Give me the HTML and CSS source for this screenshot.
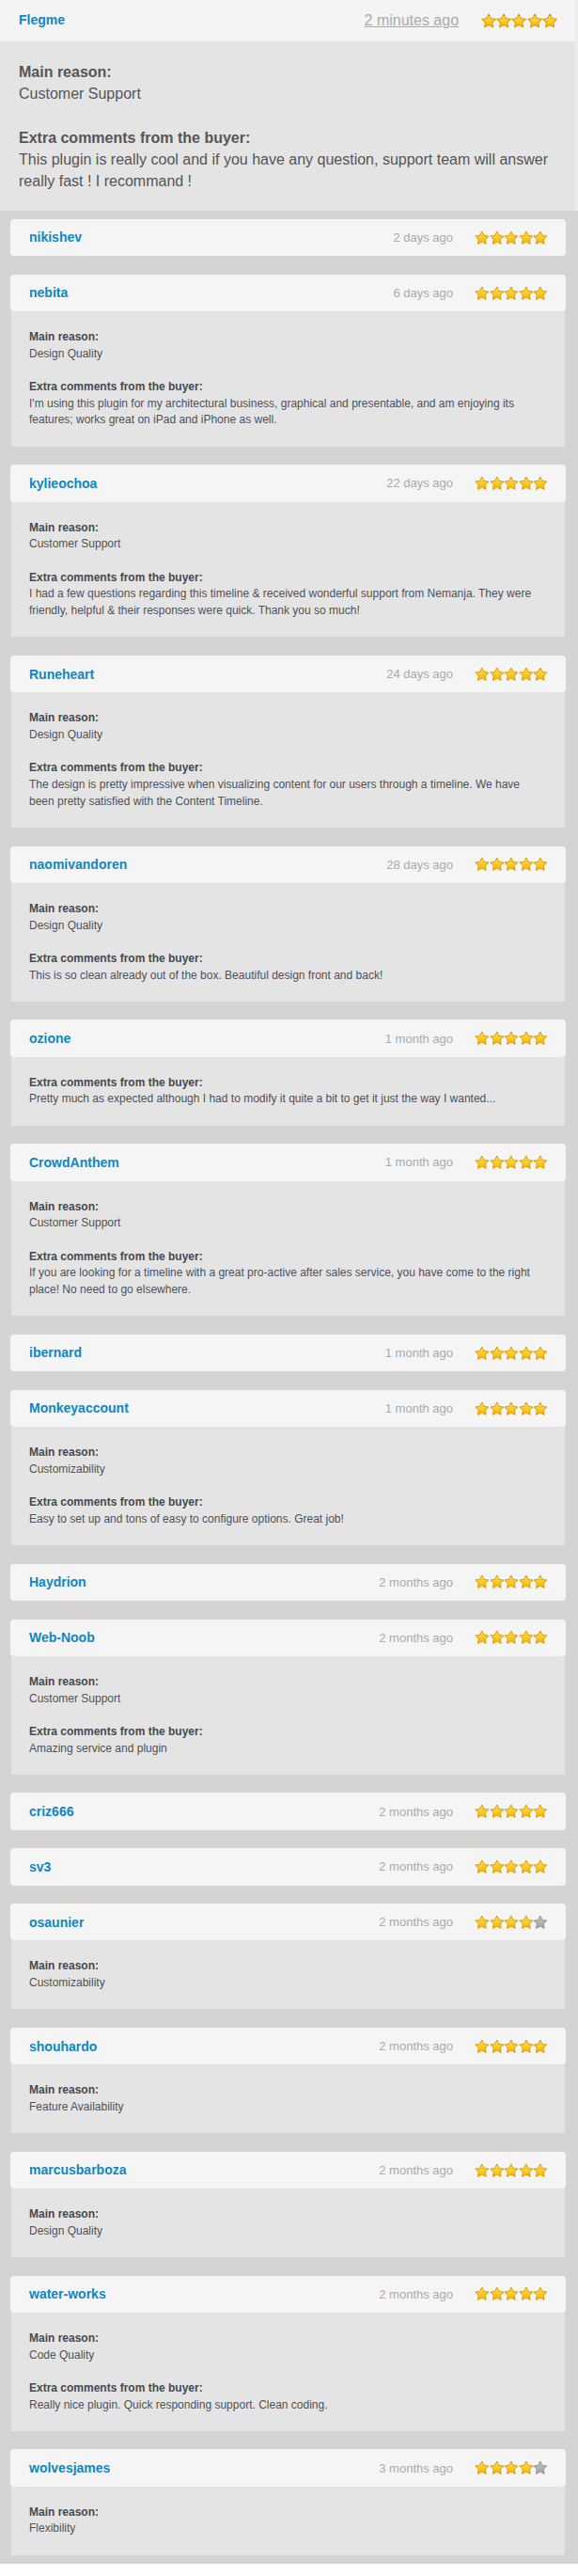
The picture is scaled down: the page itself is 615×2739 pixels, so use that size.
FILE: index.html
```html
<!DOCTYPE html>
<html lang="en">
<head>
<meta charset="utf-8">
<title>Reviews</title>
<link rel="stylesheet" href="styles.css">
</head>
<body>
<svg class="sprite" aria-hidden="true">
  <defs>
    <linearGradient id="gold" x1="0" y1="0" x2="0" y2="1">
      <stop offset="0" stop-color="#ffe15a"/>
      <stop offset="1" stop-color="#f7b500"/>
    </linearGradient>
    <linearGradient id="grey" x1="0" y1="0" x2="0" y2="1">
      <stop offset="0" stop-color="#c4c4c4"/>
      <stop offset="1" stop-color="#a2a2a2"/>
    </linearGradient>
    <symbol id="star-on" viewBox="0 0 16 16">
      <path d="M8 1 L10.23 5.53 L15.23 6.25 L11.61 9.77 L12.47 14.75 L8 12.4 L3.53 14.75 L4.39 9.77 L0.77 6.25 L5.77 5.53 Z" fill="url(#gold)" stroke="#d99a00" stroke-width="1" stroke-linejoin="round"/>
    </symbol>
    <symbol id="star-off" viewBox="0 0 16 16">
      <path d="M8 1 L10.23 5.53 L15.23 6.25 L11.61 9.77 L12.47 14.75 L8 12.4 L3.53 14.75 L4.39 9.77 L0.77 6.25 L5.77 5.53 Z" fill="url(#grey)" stroke="#929292" stroke-width="1" stroke-linejoin="round"/>
    </symbol>
  </defs>
</svg>

<div class="page-head">
  <div class="featured">
    <div class="featured-head">
      <span class="featured-name">Flegme</span>
      <a class="featured-date" href="#">2 minutes ago</a>
      <span class="stars stars-lg">
        <svg><use href="#star-on"/></svg><svg><use href="#star-on"/></svg><svg><use href="#star-on"/></svg><svg><use href="#star-on"/></svg><svg><use href="#star-on"/></svg>
      </span>
    </div>
    <div class="featured-body">
      <strong>Main reason:</strong><br>Customer Support<br><br>
      <strong>Extra comments from the buyer:</strong><br>This plugin is really cool and if you have any question, support team will answer really fast ! I recommand !
    </div>
  </div>
</div>

<div class="list">
  <div class="card">
    <div class="card-head"><span class="name">nikishev</span><span class="date">2 days ago</span><span class="stars"><svg><use href="#star-on"/></svg><svg><use href="#star-on"/></svg><svg><use href="#star-on"/></svg><svg><use href="#star-on"/></svg><svg><use href="#star-on"/></svg></span></div>
  </div>

  <div class="card">
    <div class="card-head"><span class="name">nebita</span><span class="date">6 days ago</span><span class="stars"><svg><use href="#star-on"/></svg><svg><use href="#star-on"/></svg><svg><use href="#star-on"/></svg><svg><use href="#star-on"/></svg><svg><use href="#star-on"/></svg></span></div>
    <div class="card-body"><strong>Main reason:</strong><br>Design Quality<br><br><strong>Extra comments from the buyer:</strong><br>I'm using this plugin for my architectural business, graphical and presentable, and am enjoying its features; works great on iPad and iPhone as well.</div>
  </div>

  <div class="card">
    <div class="card-head"><span class="name">kylieochoa</span><span class="date">22 days ago</span><span class="stars"><svg><use href="#star-on"/></svg><svg><use href="#star-on"/></svg><svg><use href="#star-on"/></svg><svg><use href="#star-on"/></svg><svg><use href="#star-on"/></svg></span></div>
    <div class="card-body"><strong>Main reason:</strong><br>Customer Support<br><br><strong>Extra comments from the buyer:</strong><br>I had a few questions regarding this timeline &amp; received wonderful support from Nemanja. They were friendly, helpful &amp; their responses were quick. Thank you so much!</div>
  </div>

  <div class="card">
    <div class="card-head"><span class="name">Runeheart</span><span class="date">24 days ago</span><span class="stars"><svg><use href="#star-on"/></svg><svg><use href="#star-on"/></svg><svg><use href="#star-on"/></svg><svg><use href="#star-on"/></svg><svg><use href="#star-on"/></svg></span></div>
    <div class="card-body"><strong>Main reason:</strong><br>Design Quality<br><br><strong>Extra comments from the buyer:</strong><br>The design is pretty impressive when visualizing content for our users through a timeline. We have been pretty satisfied with the Content Timeline.</div>
  </div>

  <div class="card">
    <div class="card-head"><span class="name">naomivandoren</span><span class="date">28 days ago</span><span class="stars"><svg><use href="#star-on"/></svg><svg><use href="#star-on"/></svg><svg><use href="#star-on"/></svg><svg><use href="#star-on"/></svg><svg><use href="#star-on"/></svg></span></div>
    <div class="card-body"><strong>Main reason:</strong><br>Design Quality<br><br><strong>Extra comments from the buyer:</strong><br>This is so clean already out of the box. Beautiful design front and back!</div>
  </div>

  <div class="card">
    <div class="card-head"><span class="name">ozione</span><span class="date">1 month ago</span><span class="stars"><svg><use href="#star-on"/></svg><svg><use href="#star-on"/></svg><svg><use href="#star-on"/></svg><svg><use href="#star-on"/></svg><svg><use href="#star-on"/></svg></span></div>
    <div class="card-body"><strong>Extra comments from the buyer:</strong><br>Pretty much as expected although I had to modify it quite a bit to get it just the way I wanted...</div>
  </div>

  <div class="card">
    <div class="card-head"><span class="name">CrowdAnthem</span><span class="date">1 month ago</span><span class="stars"><svg><use href="#star-on"/></svg><svg><use href="#star-on"/></svg><svg><use href="#star-on"/></svg><svg><use href="#star-on"/></svg><svg><use href="#star-on"/></svg></span></div>
    <div class="card-body"><strong>Main reason:</strong><br>Customer Support<br><br><strong>Extra comments from the buyer:</strong><br>If you are looking for a timeline with a great pro-active after sales service, you have come to the right place! No need to go elsewhere.</div>
  </div>

  <div class="card">
    <div class="card-head"><span class="name">ibernard</span><span class="date">1 month ago</span><span class="stars"><svg><use href="#star-on"/></svg><svg><use href="#star-on"/></svg><svg><use href="#star-on"/></svg><svg><use href="#star-on"/></svg><svg><use href="#star-on"/></svg></span></div>
  </div>

  <div class="card">
    <div class="card-head"><span class="name">Monkeyaccount</span><span class="date">1 month ago</span><span class="stars"><svg><use href="#star-on"/></svg><svg><use href="#star-on"/></svg><svg><use href="#star-on"/></svg><svg><use href="#star-on"/></svg><svg><use href="#star-on"/></svg></span></div>
    <div class="card-body"><strong>Main reason:</strong><br>Customizability<br><br><strong>Extra comments from the buyer:</strong><br>Easy to set up and tons of easy to configure options. Great job!</div>
  </div>

  <div class="card">
    <div class="card-head"><span class="name">Haydrion</span><span class="date">2 months ago</span><span class="stars"><svg><use href="#star-on"/></svg><svg><use href="#star-on"/></svg><svg><use href="#star-on"/></svg><svg><use href="#star-on"/></svg><svg><use href="#star-on"/></svg></span></div>
  </div>

  <div class="card">
    <div class="card-head"><span class="name">Web-Noob</span><span class="date">2 months ago</span><span class="stars"><svg><use href="#star-on"/></svg><svg><use href="#star-on"/></svg><svg><use href="#star-on"/></svg><svg><use href="#star-on"/></svg><svg><use href="#star-on"/></svg></span></div>
    <div class="card-body"><strong>Main reason:</strong><br>Customer Support<br><br><strong>Extra comments from the buyer:</strong><br>Amazing service and plugin</div>
  </div>

  <div class="card">
    <div class="card-head"><span class="name">criz666</span><span class="date">2 months ago</span><span class="stars"><svg><use href="#star-on"/></svg><svg><use href="#star-on"/></svg><svg><use href="#star-on"/></svg><svg><use href="#star-on"/></svg><svg><use href="#star-on"/></svg></span></div>
  </div>

  <div class="card">
    <div class="card-head"><span class="name">sv3</span><span class="date">2 months ago</span><span class="stars"><svg><use href="#star-on"/></svg><svg><use href="#star-on"/></svg><svg><use href="#star-on"/></svg><svg><use href="#star-on"/></svg><svg><use href="#star-on"/></svg></span></div>
  </div>

  <div class="card">
    <div class="card-head"><span class="name">osaunier</span><span class="date">2 months ago</span><span class="stars"><svg><use href="#star-on"/></svg><svg><use href="#star-on"/></svg><svg><use href="#star-on"/></svg><svg><use href="#star-on"/></svg><svg><use href="#star-off"/></svg></span></div>
    <div class="card-body"><strong>Main reason:</strong><br>Customizability</div>
  </div>

  <div class="card">
    <div class="card-head"><span class="name">shouhardo</span><span class="date">2 months ago</span><span class="stars"><svg><use href="#star-on"/></svg><svg><use href="#star-on"/></svg><svg><use href="#star-on"/></svg><svg><use href="#star-on"/></svg><svg><use href="#star-on"/></svg></span></div>
    <div class="card-body"><strong>Main reason:</strong><br>Feature Availability</div>
  </div>

  <div class="card">
    <div class="card-head"><span class="name">marcusbarboza</span><span class="date">2 months ago</span><span class="stars"><svg><use href="#star-on"/></svg><svg><use href="#star-on"/></svg><svg><use href="#star-on"/></svg><svg><use href="#star-on"/></svg><svg><use href="#star-on"/></svg></span></div>
    <div class="card-body"><strong>Main reason:</strong><br>Design Quality</div>
  </div>

  <div class="card">
    <div class="card-head"><span class="name">water-works</span><span class="date">2 months ago</span><span class="stars"><svg><use href="#star-on"/></svg><svg><use href="#star-on"/></svg><svg><use href="#star-on"/></svg><svg><use href="#star-on"/></svg><svg><use href="#star-on"/></svg></span></div>
    <div class="card-body"><strong>Main reason:</strong><br>Code Quality<br><br><strong>Extra comments from the buyer:</strong><br>Really nice plugin. Quick responding support. Clean coding.</div>
  </div>

  <div class="card">
    <div class="card-head"><span class="name">wolvesjames</span><span class="date">3 months ago</span><span class="stars"><svg><use href="#star-on"/></svg><svg><use href="#star-on"/></svg><svg><use href="#star-on"/></svg><svg><use href="#star-on"/></svg><svg><use href="#star-off"/></svg></span></div>
    <div class="card-body"><strong>Main reason:</strong><br>Flexibility</div>
  </div>
</div>
</body>
</html>
```

FILE: styles.css
```css
html, body {
  margin: 0;
  padding: 0;
  background: #ffffff;
}

body {
  font-family: "Liberation Sans", Arial, Helvetica, sans-serif;
  color: #555555;
}

.sprite {
  position: absolute;
  width: 0;
  height: 0;
  overflow: hidden;
}

/* ---------- featured review ---------- */
.page-head {
  background: #ececec;
}

.featured {
  width: 612px;
}

.featured-head {
  height: 44px;
  box-sizing: border-box;
  background: #f4f4f4;
  display: flex;
  align-items: center;
  padding: 0 19px 0 20px;
}

.featured-name {
  font-size: 14px;
  font-weight: bold;
  color: #0e87c3;
  margin-bottom: 3px;
}

.featured-date {
  margin-left: auto;
  font-size: 16px;
  color: #aaaaaa;
  text-decoration: underline;
}

.featured-body {
  background: #e4e4e4;
  padding: 21px 20px 19px;
  font-size: 16px;
  line-height: 23.3px;
  color: #555555;
}

.featured-body strong {
  color: #555555;
}

/* ---------- stars ---------- */
.stars {
  display: flex;
  margin-left: 23px;
}

.stars svg {
  width: 15.6px;
  height: 15.6px;
  display: block;
}

.stars-lg {
  margin-left: 24px;
}

.stars-lg svg {
  width: 16.2px;
  height: 16.2px;
}

/* ---------- list ---------- */
.list {
  background: #d5d4d2;
  padding: 9px 13px 9px 11px;
  display: flex;
  flex-direction: column;
  gap: 19.6px;
}

.card-head {
  height: 39.3px;
  box-sizing: border-box;
  background: #f5f5f5;
  border-radius: 4px;
  display: flex;
  align-items: center;
  padding: 0 19px 0 20px;
}

.name {
  font-size: 14px;
  font-weight: bold;
  color: #0e87c3;
}

.date {
  margin-left: auto;
  font-size: 13px;
  color: #aaaaaa;
}

.card-body {
  background: #e4e4e4;
  margin: 0 1px;
  padding: 19px 19px 18.5px;
  font-size: 12px;
  line-height: 17.7px;
  color: #505058;
}

.card-body strong {
  color: #48484f;
}
```
